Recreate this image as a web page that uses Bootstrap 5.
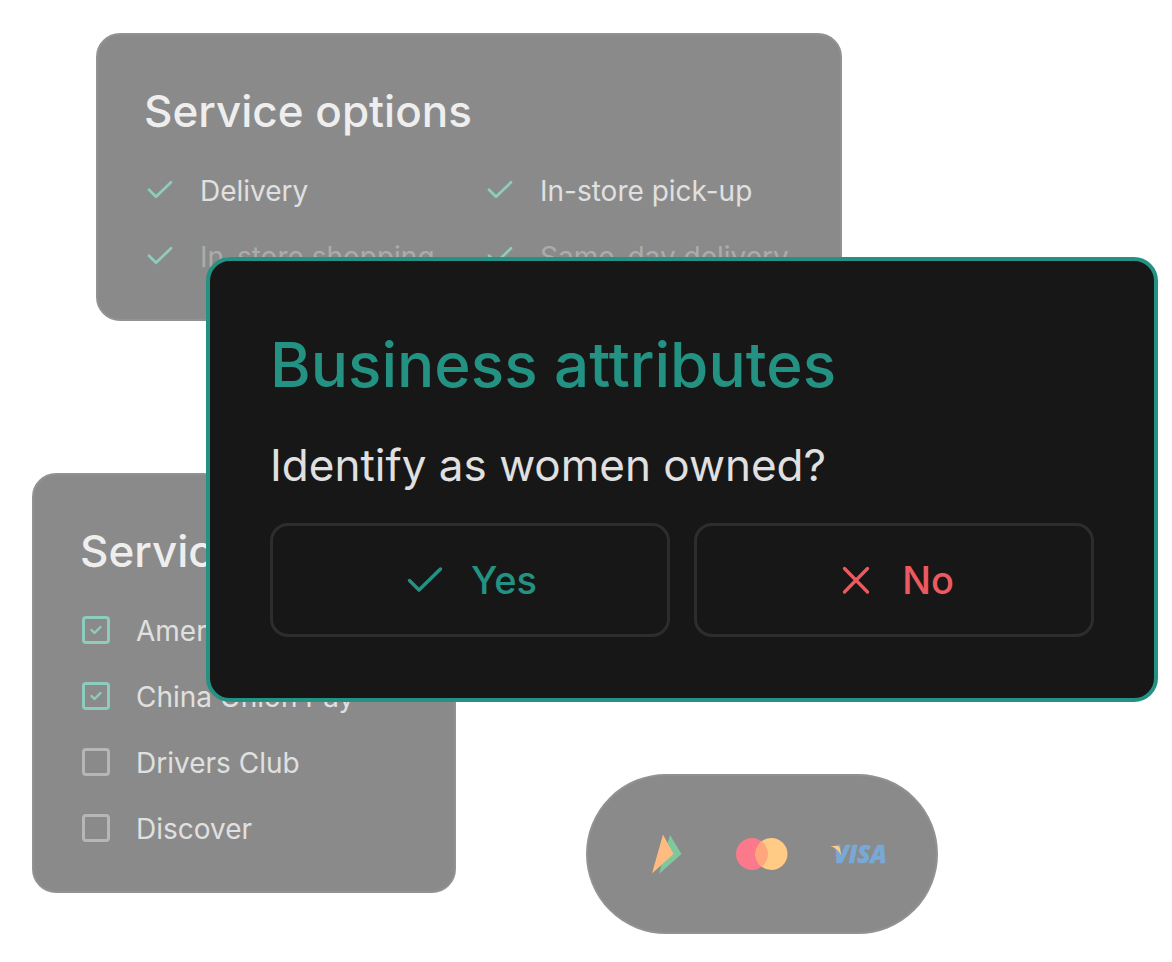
<!DOCTYPE html>
<html lang="en">
<head>
<meta charset="utf-8">
<meta name="viewport" content="width=device-width, initial-scale=1">
<title>Business attributes</title>
<link href="https://cdn.jsdelivr.net/npm/bootstrap@5.3.0/dist/css/bootstrap.min.css" rel="stylesheet">
<style>
  body { font-family: Inter, "Liberation Sans", sans-serif; background: #fff; }

  /* Overlapping panels share one grid; the dialog spans tracks of its neighbours. */
  .board {
    display: grid;
    grid-template-columns: 64fr 110fr 250fr 130fr 256fr 96fr 220fr;
    grid-template-rows: 224px 64px 152px 229px 72px 119px auto;
    padding: 33px 14px 28px 32px;
  }
  .area-options  { grid-area: 1 / 2 / 3 / 6; }
  .area-payments { grid-area: 4 / 1 / 7 / 4; }
  .area-brands   { grid-area: 6 / 5 / 8 / 7; }
  .area-dialog   { grid-area: 2 / 3 / 5 / 8; z-index: 1; }

  .panel { background: #8a8a8a; border: 2px solid #929292; border-radius: 24px; padding: 46px; color: #e0e0e0; }
  .panel-title { font-size: 44px; line-height: 60px; font-weight: 500; color: #eee; margin: 0 0 33px; white-space: nowrap; }
  .rows { display: grid; gap: 32px 30px; font-size: 28px; line-height: 34px; font-weight: 400; white-space: nowrap; margin: 0; }
  .rows-2 { grid-template-columns: 1fr 1fr; }
  .rows svg { width: 32px; height: 32px; color: #8ecdbe; }
  .faded { color: #acacac; }

  .tick.form-check-input {
    width: 28px; height: 28px; margin: 0 2px 2px; flex: none;
    background-color: transparent; border: 3px solid #b6b6b6; border-radius: 4px;
  }
  .tick.form-check-input:checked {
    background-color: transparent; border-color: #8ecdbe;
    background-image: url("data:image/svg+xml,%3Csvg xmlns='http://www.w3.org/2000/svg' viewBox='0 0 22 22'%3E%3Cpath d='M6.500 11l3 3 6-6' fill='none' stroke='%238ecdbe' stroke-width='2.400' stroke-linecap='round' stroke-linejoin='round'/%3E%3C/svg%3E");
  }

  .brands { border-radius: 80px; height: 160px; padding: 0; gap: 32px; }
  .brands svg { width: 64px; height: 64px; }
  .visa-word { font-family: "Open Sans", sans-serif; font-weight: 800; font-style: italic; font-size: 24px; }

  .dialog-card { background: #171717; border: 4px solid #249282; border-radius: 24px; padding: 60px; }
  .dialog-title { font-size: 62px; line-height: 88px; font-weight: 500; color: #249282; margin: 0 0 24px; white-space: nowrap; }
  .question { font-size: 44px; line-height: 64px; font-weight: 400; color: #e0e0e0; margin: 0 0 26px; white-space: nowrap; }
  .answer { height: 114px; border: 3px solid #2d2d2d; border-radius: 18px; font-size: 38px; font-weight: 500; --bs-btn-hover-border-color: #444; }
  .answer svg { width: 44px; height: 44px; }
  .answer-yes, .answer-yes:hover { color: #249282; }
  .answer-no, .answer-no:hover { color: #ec5a60; }
</style>
</head>
<body>
<svg class="d-none" aria-hidden="true">
  <symbol id="check" viewBox="0 0 32 32"><path d="M5 14.800l7 7L27 7.300" fill="none" stroke="currentColor" stroke-width="2.700" stroke-linecap="round" stroke-linejoin="round"/></symbol>
</svg>

<main class="board">
  <section class="panel area-options">
    <h2 class="panel-title">Service options</h2>
    <ul class="rows rows-2 list-unstyled">
      <li class="d-flex align-items-center gap-4"><svg aria-hidden="true"><use href="#check"/></svg><span>Delivery</span></li>
      <li class="d-flex align-items-center gap-4"><svg aria-hidden="true"><use href="#check"/></svg><span>In-store pick-up</span></li>
      <li class="d-flex align-items-center gap-4"><svg aria-hidden="true"><use href="#check"/></svg><span class="faded">In-store shopping</span></li>
      <li class="d-flex align-items-center gap-4"><svg aria-hidden="true"><use href="#check"/></svg><span class="faded">Same-day delivery</span></li>
    </ul>
  </section>

  <section class="panel area-payments">
    <h2 class="panel-title">Services</h2>
    <div class="rows">
      <label class="d-flex align-items-center gap-4"><input class="form-check-input tick" type="checkbox" checked><span>American</span></label>
      <label class="d-flex align-items-center gap-4"><input class="form-check-input tick" type="checkbox" checked><span>China Union Pay</span></label>
      <label class="d-flex align-items-center gap-4"><input class="form-check-input tick" type="checkbox"><span>Drivers Club</span></label>
      <label class="d-flex align-items-center gap-4"><input class="form-check-input tick" type="checkbox"><span>Discover</span></label>
    </div>
  </section>

  <section class="panel brands area-brands d-flex align-items-center justify-content-center">
    <svg viewBox="0 0 64 64" aria-hidden="true">
      <path d="M36 13L47.500 32 25 52z" fill="#7fc79c"/>
      <path d="M29 12.500L39.500 32 18 51.500z" fill="#ffbb80"/>
    </svg>
    <svg viewBox="0 0 64 64" aria-hidden="true">
      <circle cx="22" cy="32" r="16" fill="#fa7a8b"/>
      <circle cx="41.500" cy="32" r="16" fill="#ffcb85"/>
      <path d="M31.750 19.300a16 16 0 0 1 0 25.400a16 16 0 0 1 0-25.400z" fill="#ffa67d"/>
    </svg>
    <svg viewBox="0 0 64 64" role="img" aria-label="Visa">
      <text class="visa-word" x="8" y="40.500" fill="#78a9d6" stroke="#78a9d6" stroke-width=".5">VISA</text>
      <path d="M4.500 24h6.500c2 0 2.600.8 3 2.500l1.200 7C13 29 9.500 25.500 4.500 24z" fill="#ffcb85"/>
    </svg>
  </section>

  <section class="dialog-card area-dialog" role="dialog" aria-labelledby="dialog-title">
    <h1 class="dialog-title" id="dialog-title">Business attributes</h1>
    <p class="question">Identify as women owned?</p>
    <div class="d-flex gap-4">
      <button type="button" class="btn answer answer-yes flex-fill w-50 d-flex align-items-center justify-content-center gap-4">
        <svg viewBox="0 0 44 44" aria-hidden="true"><path d="M6.500 22.500l9.500 9.500L37.500 11" fill="none" stroke="currentColor" stroke-width="3.500" stroke-linecap="round" stroke-linejoin="round"/></svg>
        <span>Yes</span>
      </button>
      <button type="button" class="btn answer answer-no flex-fill w-50 d-flex align-items-center justify-content-center gap-4">
        <svg viewBox="0 0 44 44" aria-hidden="true"><path d="M10.500 10.500l23 23.500M33.500 10.500l-23 23.500" fill="none" stroke="currentColor" stroke-width="3.300" stroke-linecap="round"/></svg>
        <span>No</span>
      </button>
    </div>
  </section>
</main>
<script src="https://cdn.jsdelivr.net/npm/bootstrap@5.3.0/dist/js/bootstrap.bundle.min.js"></script>
</body>
</html>
